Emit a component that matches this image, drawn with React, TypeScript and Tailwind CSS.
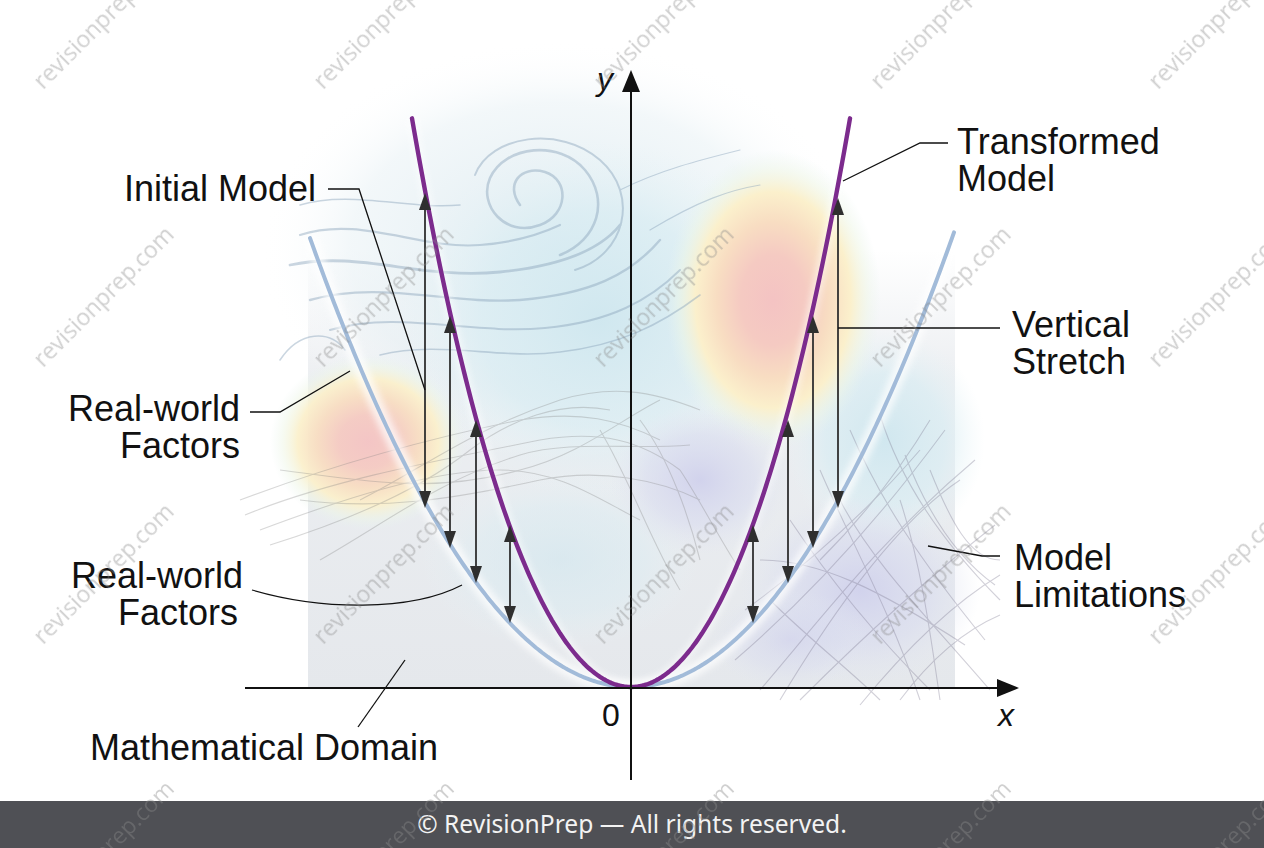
import React from "react";

const OX = 631;
const OY = 687;

function purpleY(x: number) {
  const dx = x - OX;
  const d2 = dx * dx;
  return OY - (0.01052 * d2 + 2.79e-8 * d2 * d2);
}
function blueY(x: number) {
  const dx = x - OX;
  return OY - 0.004357 * dx * dx;
}
function pathFrom(f: (x: number) => number, x0: number, x1: number) {
  const pts: string[] = [];
  for (let x = x0; x <= x1 + 0.001; x += 2) {
    pts.push(`${x.toFixed(1)},${f(x).toFixed(1)}`);
  }
  return "M" + pts.join(" L");
}

const arrows: [number, number, number][] = [
  [425, 193, 508],
  [450, 316, 548],
  [476, 420, 583],
  [510, 525, 623],
  [753, 525, 623],
  [788, 420, 583],
  [813, 316, 548],
  [838, 198, 508],
];

const wmCols = [105, 385, 665, 942, 1220];
const wmRows = [20, 298, 575, 852];

const hatchA = [
  "M760,690 C820,620 880,540 975,460",
  "M735,660 C805,600 875,525 945,430",
  "M800,700 C860,640 925,580 995,525",
  "M860,705 C905,650 950,605 1000,575",
  "M745,610 C800,570 860,520 920,450",
  "M780,700 C840,600 900,520 960,480",
  "M900,700 C930,660 965,630 1000,615",
  "M820,560 C860,520 900,470 930,420",
];
const hatchB = [
  "M850,430 C880,500 920,560 985,640",
  "M880,415 C900,480 940,540 1000,600",
  "M820,470 C850,540 890,610 920,700",
  "M790,520 C830,580 880,640 930,690",
  "M905,455 C930,520 960,560 995,585",
  "M760,560 C820,560 880,590 965,645",
  "M840,500 C870,560 930,620 990,690",
  "M770,600 C810,640 850,670 880,700",
  "M900,500 C920,560 930,630 940,700",
  "M930,470 C950,520 970,560 1000,560",
];

function Diagram() {
  const purple = pathFrom(purpleY, 412, 851);
  const blue = pathFrom(blueY, 310, 955);
  return (
    <svg width="1264" height="801" viewBox="0 0 1264 801" className="block">
      <defs>
        <filter id="blur3" x="-20%" y="-20%" width="140%" height="140%">
          <feGaussianBlur stdDeviation="3" />
        </filter>
        <linearGradient id="domain" x1="0" y1="0" x2="0" y2="1">
          <stop offset="0" stopColor="#e7eaee" stopOpacity="0" />
          <stop offset="0.3" stopColor="#e7eaee" stopOpacity="0.8" />
          <stop offset="1" stopColor="#e5e8ec" stopOpacity="1" />
        </linearGradient>
        <radialGradient id="heat">
          <stop offset="0" stopColor="#f4c3c3" />
          <stop offset="0.3" stopColor="#f5cac2" />
          <stop offset="0.52" stopColor="#f8ddc2" />
          <stop offset="0.72" stopColor="#fbf0cc" />
          <stop offset="0.88" stopColor="#eef6e6" stopOpacity="0.5" />
          <stop offset="1" stopColor="#e8f4f0" stopOpacity="0" />
        </radialGradient>
        <radialGradient id="cyan">
          <stop offset="0" stopColor="#cfe7ef" stopOpacity="0.95" />
          <stop offset="0.6" stopColor="#d9edf3" stopOpacity="0.7" />
          <stop offset="1" stopColor="#e8f4f7" stopOpacity="0" />
        </radialGradient>
        <radialGradient id="lav">
          <stop offset="0" stopColor="#d0d1ec" stopOpacity="0.95" />
          <stop offset="0.6" stopColor="#d9dcef" stopOpacity="0.6" />
          <stop offset="1" stopColor="#e2e6f2" stopOpacity="0" />
        </radialGradient>
        <radialGradient id="glowTop">
          <stop offset="0" stopColor="#d9e8ef" stopOpacity="0.9" />
          <stop offset="0.7" stopColor="#e6f0f4" stopOpacity="0.5" />
          <stop offset="1" stopColor="#ffffff" stopOpacity="0" />
        </radialGradient>
      </defs>

      {/* background domain */}
      <rect x="308" y="250" width="647" height="437" fill="url(#domain)" />

      {/* pastel blobs */}
      <ellipse cx="560" cy="250" rx="300" ry="210" fill="url(#glowTop)" />
      <ellipse cx="600" cy="320" rx="200" ry="180" fill="url(#cyan)" />
      <ellipse cx="885" cy="440" rx="100" ry="110" fill="url(#cyan)" />
      <ellipse cx="560" cy="560" rx="140" ry="90" fill="url(#cyan)" opacity="0.6" />
      <ellipse cx="773" cy="300" rx="108" ry="150" fill="url(#heat)" />
      <ellipse cx="368" cy="442" rx="98" ry="88" fill="url(#heat)" opacity="0.95" />
      <ellipse cx="700" cy="480" rx="90" ry="75" fill="url(#lav)" />
      <ellipse cx="860" cy="590" rx="120" ry="95" fill="url(#lav)" />
      <ellipse cx="790" cy="640" rx="80" ry="50" fill="url(#lav)" opacity="0.7" />

      {/* swirl lines at top */}
      <g fill="none" stroke="#8ca5bc" strokeLinecap="round" opacity="0.45">
        <path d="M520,205 C505,185 520,165 545,172 C570,180 568,215 540,225 C505,238 478,205 490,178 C505,145 560,140 585,170 C610,200 598,240 560,255" strokeWidth="2.6" />
        <path d="M475,175 C490,135 560,125 600,160 C640,195 625,255 575,270" strokeWidth="2" />
        <path d="M300,235 C360,215 420,250 480,245 C520,242 545,232 560,225" strokeWidth="2.2" />
        <path d="M290,265 C360,250 420,280 500,272 C560,266 600,250 620,225" strokeWidth="2.8" />
        <path d="M310,300 C380,280 450,305 520,300 C590,294 630,275 660,240" strokeWidth="2.4" />
        <path d="M330,330 C400,310 470,335 545,328 C610,322 650,300 680,270" strokeWidth="2" />
        <path d="M380,355 C440,340 500,360 560,352 C620,345 660,325 700,295" strokeWidth="1.6" />
        <path d="M280,360 C300,330 330,330 345,350" strokeWidth="1.6" />
        <path d="M300,205 C350,190 410,210 460,205" strokeWidth="1.5" />
        <path d="M620,190 C660,170 700,160 740,150" strokeWidth="1.2" />
        <path d="M650,230 C700,200 730,190 760,185" strokeWidth="1.2" />
      </g>

      {/* tangled lines lower left */}
      <g fill="none" stroke="#7f7f7f" strokeWidth="1.1" opacity="0.3">
        <path d="M240,500 C320,470 420,440 520,420 C580,410 620,420 660,440" />
        <path d="M245,515 C330,480 440,460 540,440 C600,430 640,440 680,470" />
        <path d="M260,530 C340,500 430,470 500,470 C560,470 600,500 640,520" />
        <path d="M280,470 C360,480 430,495 520,470 C580,455 620,420 660,400" />
        <path d="M270,545 C350,520 420,490 470,450 C510,420 560,400 610,410" />
        <path d="M300,500 C380,510 450,500 540,480 C600,468 660,480 700,500" />
        <path d="M320,560 C390,520 440,480 520,455 C570,440 630,450 690,445" />
        <path d="M360,500 C420,470 470,430 560,400 C610,385 650,390 700,410" />
        <path d="M640,420 C670,460 690,520 700,560" />
        <path d="M600,430 C630,480 650,540 680,590" />
        <path d="M680,470 C700,500 720,540 740,570" />
      </g>

      {/* crosshatch lower right */}
      <g fill="none" stroke="#7b778f" strokeWidth="1.1" opacity="0.34">
        {hatchA.map((d, i) => (
          <path key={`a${i}`} d={d} />
        ))}
        {hatchB.map((d, i) => (
          <path key={`b${i}`} d={d} />
        ))}
      </g>

      {/* white glow around curves */}
      <path d={blue} fill="none" stroke="#ffffff" strokeWidth="14" opacity="0.7" filter="url(#blur3)" />
      <path d={purple} fill="none" stroke="#ffffff" strokeWidth="10" opacity="0.5" filter="url(#blur3)" />

      {/* curves */}
      <path d={blue} fill="none" stroke="#a2bbd9" strokeWidth="4" strokeLinecap="round" />
      <path d={purple} fill="none" stroke="#7c2b8d" strokeWidth="4.4" strokeLinecap="round" />

      {/* stretch arrows */}
      <g fill="#2f2f2f" stroke="#2f2f2f">
        {arrows.map(([x, t, b], i) => (
          <g key={i}>
            <line x1={x} y1={t + 12} x2={x} y2={b - 12} strokeWidth="1.8" />
            <polygon points={`${x},${t} ${x - 6},${t + 17} ${x + 6},${t + 17}`} stroke="none" />
            <polygon points={`${x},${b} ${x - 6},${b - 17} ${x + 6},${b - 17}`} stroke="none" />
          </g>
        ))}
      </g>

      {/* axes */}
      <g stroke="#111111" strokeWidth="2">
        <line x1="631" y1="780" x2="631" y2="88" />
        <line x1="245" y1="688" x2="1000" y2="688" />
      </g>
      <polygon points="631,70 622,92 640,92" fill="#111111" />
      <polygon points="1019,688 997,679 997,697" fill="#111111" />

      {/* leader lines */}
      <g fill="none" stroke="#111111" strokeWidth="1.3">
        <path d="M328,189 H359 L425,390" />
        <path d="M250,412 H280 L350,371" />
        <path d="M252,590 C320,610 410,612 462,585" />
        <path d="M358,727 L405,660" />
        <path d="M948,143 H920 L843,181" />
        <path d="M838,328 H1000" />
        <path d="M928,546 L982,556 H1000" />
      </g>

      {/* labels */}
      <g fill="#111111" fontSize="36" className="font-[family-name:'Liberation_Sans',Arial,sans-serif]">
        <text x="124" y="201">Initial Model</text>
        <text x="240" y="421" textAnchor="end">Real-world</text>
        <text x="240" y="458" textAnchor="end">Factors</text>
        <text x="243" y="588" textAnchor="end">Real-world</text>
        <text x="238" y="625" textAnchor="end">Factors</text>
        <text x="90" y="760">Mathematical Domain</text>
        <text x="957" y="154">Transformed</text>
        <text x="957" y="191">Model</text>
        <text x="1012" y="337">Vertical</text>
        <text x="1012" y="374">Stretch</text>
        <text x="1014" y="570">Model</text>
        <text x="1014" y="607">Limitations</text>
        <text x="597" y="90" fontStyle="italic" fontSize="32">y</text>
        <text x="602" y="726" fontSize="32">0</text>
        <text x="998" y="726" fontStyle="italic" fontSize="32">x</text>
      </g>
    </svg>
  );
}

function Watermarks() {
  return (
    <svg width="1264" height="848" viewBox="0 0 1264 848" className="absolute inset-0 pointer-events-none">
      <g fill="#8a8a8a" opacity="0.4" fontSize="23" className="font-[family-name:'Open_Sans','Noto_Sans',sans-serif]">
        {wmRows.map((y) =>
          wmCols.map((x) => (
            <text key={`${x}-${y}`} x={x} y={y} textAnchor="middle" dominantBaseline="middle" transform={`rotate(-45 ${x} ${y})`}>
              revisionprep.com
            </text>
          ))
        )}
      </g>
    </svg>
  );
}

export default function App() {
  return (
    <div className="relative w-[1264px] h-[848px] overflow-hidden bg-white flex flex-col">
      <div className="h-[801px] shrink-0">
        <Diagram />
      </div>
      <footer className="h-[47px] shrink-0 bg-[#4f5055] flex items-center justify-center text-[#f3f3f3] text-[24.6px] font-[family-name:'Noto_Sans','Open_Sans',sans-serif]">
        © RevisionPrep — All rights reserved.
      </footer>
      <Watermarks />
    </div>
  );
}
